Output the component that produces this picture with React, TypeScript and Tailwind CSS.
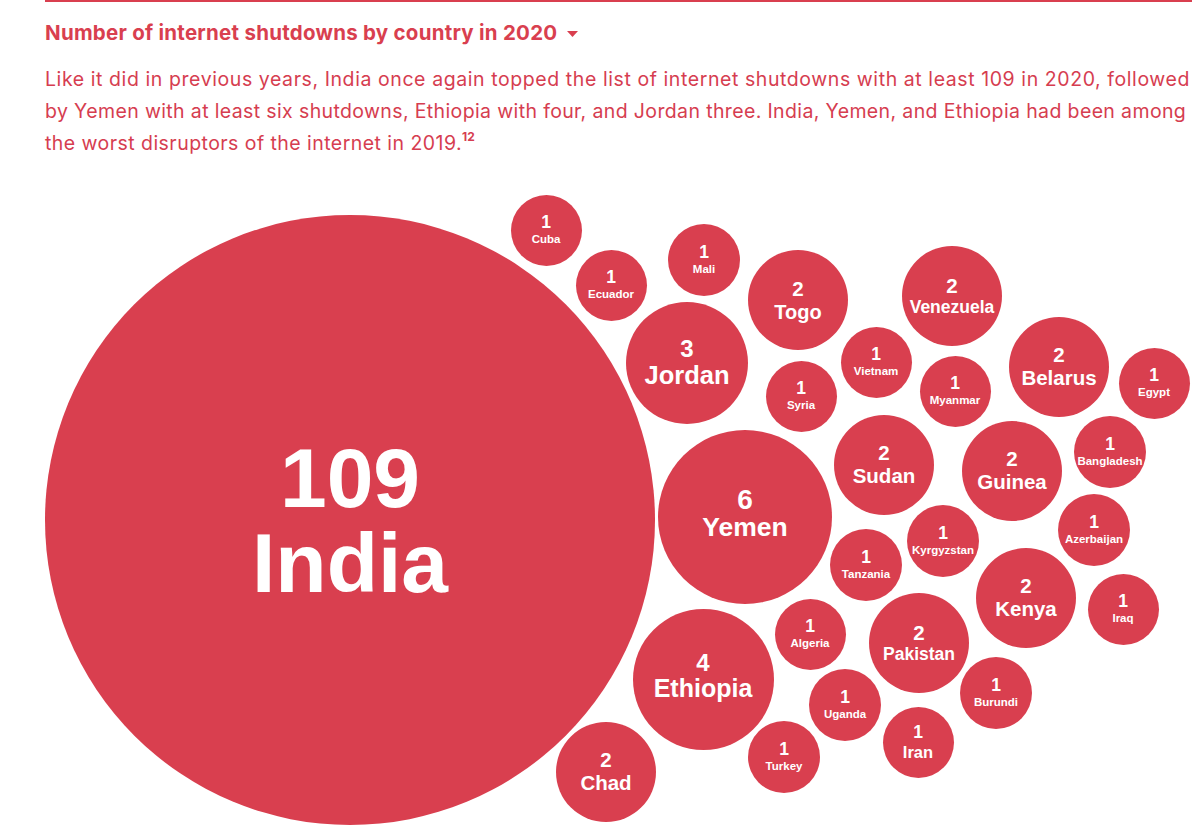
import React from "react";

type Bubble = {
  name: string;
  n: number;
  cx: number;
  cy: number;
  r: number;
  ns?: number;
  ls?: number;
  gap?: number;
  lift?: number;
};

const CHART_TOP = 180;

const bubbles: Bubble[] = [
  { name: "India", n: 109, cx: 350, cy: 520, r: 305, ns: 84, ls: 84, gap: 1, lift: 0 },
  { name: "Cuba", n: 1, cx: 546, cy: 230, r: 35.5 },
  { name: "Ecuador", n: 1, cx: 611, cy: 285, r: 35.5 },
  { name: "Mali", n: 1, cx: 704, cy: 260, r: 36 },
  { name: "Togo", n: 2, cx: 798, cy: 300, r: 50, ns: 20.5, ls: 20 },
  { name: "Jordan", n: 3, cx: 687, cy: 363, r: 61, ns: 24, ls: 25.5, gap: 2 },
  { name: "Syria", n: 1, cx: 801, cy: 396, r: 35.5 },
  { name: "Venezuela", n: 2, cx: 952, cy: 296, r: 50, ns: 20.5, ls: 17.5 },
  { name: "Vietnam", n: 1, cx: 876, cy: 362, r: 35.5 },
  { name: "Myanmar", n: 1, cx: 955, cy: 391, r: 35.5 },
  { name: "Belarus", n: 2, cx: 1059, cy: 367, r: 50, ns: 20.5, ls: 20.5 },
  { name: "Egypt", n: 1, cx: 1154, cy: 383, r: 35.5 },
  { name: "Bangladesh", n: 1, cx: 1110, cy: 452, r: 36 },
  { name: "Yemen", n: 6, cx: 745, cy: 517, r: 87, ns: 28, ls: 26.5, gap: 0, lift: 8 },
  { name: "Sudan", n: 2, cx: 884, cy: 465, r: 50, ns: 20.5, ls: 20.5 },
  { name: "Guinea", n: 2, cx: 1012, cy: 471, r: 50, ns: 20.5, ls: 20.5 },
  { name: "Tanzania", n: 1, cx: 866, cy: 565, r: 36 },
  { name: "Kyrgyzstan", n: 1, cx: 943, cy: 541, r: 36 },
  { name: "Azerbaijan", n: 1, cx: 1094, cy: 530, r: 36 },
  { name: "Kenya", n: 2, cx: 1026, cy: 598, r: 50, ns: 20.5, ls: 20.5 },
  { name: "Iraq", n: 1, cx: 1123, cy: 609, r: 35.5 },
  { name: "Burundi", n: 1, cx: 996, cy: 693, r: 36 },
  { name: "Ethiopia", n: 4, cx: 703, cy: 679, r: 70.5, ns: 24, ls: 25, gap: 1, lift: 7 },
  { name: "Chad", n: 2, cx: 606, cy: 772, r: 50, ns: 20.5, ls: 20.5 },
  { name: "Algeria", n: 1, cx: 810, cy: 634, r: 35.5 },
  { name: "Pakistan", n: 2, cx: 919, cy: 643, r: 50, ns: 20.5, ls: 17.5 },
  { name: "Uganda", n: 1, cx: 845, cy: 705, r: 36 },
  { name: "Turkey", n: 1, cx: 784, cy: 757, r: 36 },
  { name: "Iran", n: 1, cx: 918, cy: 742, r: 35.5, ns: 17.5, ls: 16.5 },
];

const BubbleNode = ({ b }: { b: Bubble }) => {
  const size = b.r * 2;
  return (
    <div
      className="absolute flex flex-col items-center justify-center rounded-full bg-[#d93f4f] text-center font-bold text-white"
      style={{
        left: b.cx - b.r,
        top: b.cy - b.r - CHART_TOP,
        width: size,
        height: size,
        gap: b.gap ?? 2.5,
        paddingBottom: b.lift ?? 0,
      }}
    >
      <span className="leading-none" style={{ fontSize: b.ns ?? 17.5 }}>
        {b.n}
      </span>
      <span className="whitespace-nowrap leading-none" style={{ fontSize: b.ls ?? 11.5 }}>
        {b.name}
      </span>
    </div>
  );
};

export default function App() {
  return (
    <div className="relative h-[834px] w-[1200px] overflow-hidden bg-white font-['Liberation_Sans',Arial,sans-serif]">
      <div className="h-[180px] px-[45px]">
        <div className="h-[2px] w-[1147px] bg-[#d93f4f]" />
        <h2 className="mt-[18px] flex items-center gap-[10px] font-['Inter','Liberation_Sans',sans-serif] text-[20.5px] font-bold leading-[26px] tracking-[0.25px] text-[#d93f4f]">
          Number of internet shutdowns by country in 2020
          <svg width="11" height="6" viewBox="0 0 11 6" className="mt-[2px]">
            <polygon points="0,0 11,0 5.5,6" fill="#d93f4f" />
          </svg>
        </h2>
        <p className="mt-[17px] whitespace-nowrap font-['Inter','Liberation_Sans',sans-serif] text-[19.5px] leading-[32px] text-[#d63d50]">
          <span className="block tracking-[0.58px]">
            Like it did in previous years, India once again topped the list of internet shutdowns with at least 109 in 2020, followed
          </span>
          <span className="block tracking-[0.37px]">
            by Yemen with at least six shutdowns, Ethiopia with four, and Jordan three. India, Yemen, and Ethiopia had been among
          </span>
          <span className="block tracking-[0.45px]">
            the worst disruptors of the internet in 2019.
            <span className="relative -top-[9px] text-[12px] font-bold tracking-normal">12</span>
          </span>
        </p>
      </div>
      <div className="relative h-[654px] w-full">
        {bubbles.map((b) => (
          <BubbleNode key={b.name} b={b} />
        ))}
      </div>
    </div>
  );
}
